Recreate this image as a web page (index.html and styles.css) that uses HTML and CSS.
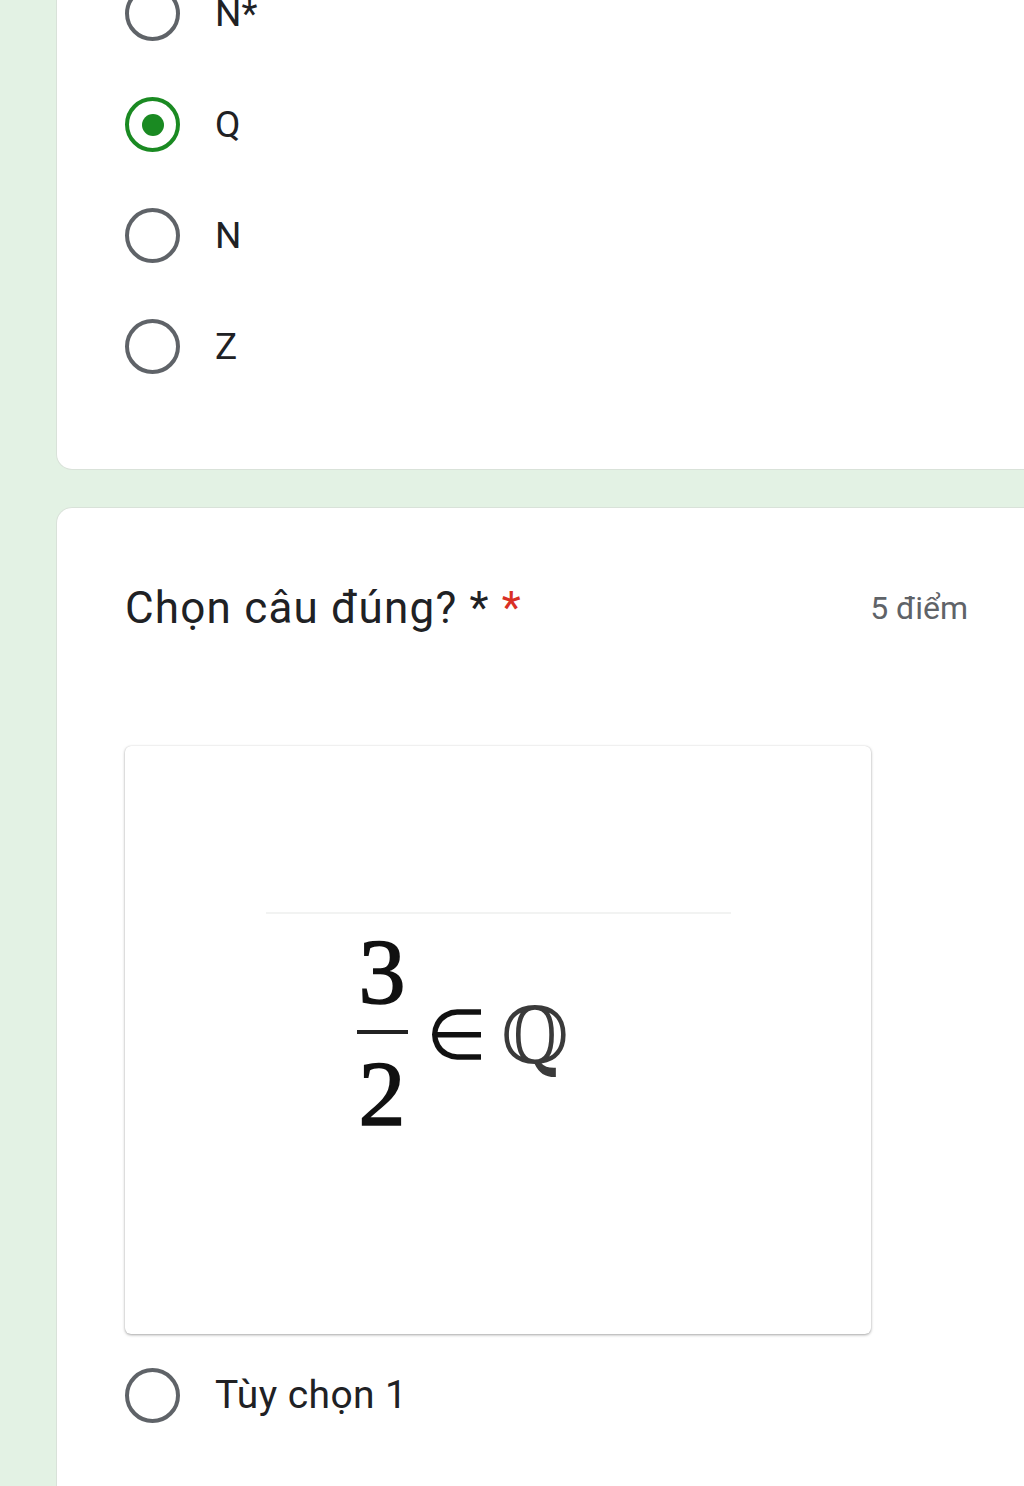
FILE: index.html
```html
<!DOCTYPE html>
<html lang="vi">
<head>
<meta charset="utf-8">
<title>Form</title>
<link rel="stylesheet" href="styles.css">
</head>
<body>
<main class="page">
  <section class="card card-top">
    <div class="option"><span class="radio"></span><span class="label">N*</span></div>
    <div class="option"><span class="radio checked"><span class="dot"></span></span><span class="label">Q</span></div>
    <div class="option"><span class="radio"></span><span class="label">N</span></div>
    <div class="option"><span class="radio"></span><span class="label">Z</span></div>
  </section>
  <section class="card card-q">
    <div class="q-head">
      <div class="q-title">Chọn câu đúng? * <span class="req">*</span></div>
      <div class="q-points">5 điểm</div>
    </div>
    <div class="q-image">
      <div class="img-line"></div>
      <div class="math">
        <span class="frac">
          <span class="num">3</span>
          <span class="bar"></span>
          <span class="den">2</span>
        </span>
        <span class="elem">∈</span>
        <span class="setq">ℚ</span>
      </div>
    </div>
    <div class="option option-last"><span class="radio"></span><span class="label label-lg">Tùy chọn 1</span></div>
  </section>
</main>
</body>
</html>
```

FILE: styles.css
```css
html, body {
  margin: 0;
  padding: 0;
}
body {
  background: #e3f2e4;
  overflow: hidden;
  font-family: Roboto, "Noto Sans", "Liberation Sans", sans-serif;
  color: #202124;
}
.page {
  padding-left: 56px;
  display: flex;
  flex-direction: column;
  gap: 37px;
}
.card {
  background: #ffffff;
  border: 1px solid #d9e2d9;
  margin-right: -40px;
}
.card-top {
  margin-top: -60px;
  padding: 18px 0 67px 68px;
  border-radius: 0 0 0 16px;
  border-top: none;
}
.card-q {
  padding: 76px 0 40px 68px;
  border-radius: 16px 0 0 0;
  border-bottom: none;
  min-height: 1000px;
}
.option {
  height: 111px;
  display: flex;
  align-items: center;
  gap: 35px;
}
.option-last {
  margin-top: 6px;
}
.radio {
  width: 55px;
  height: 55px;
  box-sizing: border-box;
  border: 4px solid #5f6368;
  border-radius: 50%;
  display: flex;
  align-items: center;
  justify-content: center;
  flex: none;
}
.radio.checked {
  border-color: #1a8a22;
}
.dot {
  width: 22px;
  height: 22px;
  border-radius: 50%;
  background: #1a8a22;
}
.label {
  font-size: 37px;
  line-height: 1;
  color: #202124;
}
.label-lg {
  font-size: 39px;
  letter-spacing: 0.4px;
}
.q-head {
  width: 843px;
  display: flex;
  justify-content: space-between;
  align-items: center;
  height: 48px;
}
.q-title {
  font-size: 44px;
  letter-spacing: 1.2px;
  line-height: 48px;
  color: #202124;
}
.req {
  color: #d93025;
}
.q-points {
  font-size: 32px;
  color: #5f6368;
}
.q-image {
  margin-top: 114px;
  width: 746px;
  height: 588px;
  box-sizing: border-box;
  background: #ffffff;
  border-radius: 6px;
  box-shadow: 0 1px 3px rgba(0, 0, 0, 0.35), 0 0 1px rgba(0, 0, 0, 0.15);
  padding-top: 166px;
  padding-left: 141px;
}
.img-line {
  width: 465px;
  height: 2px;
  background: #f2f3f2;
}
.math {
  margin-top: 10px;
  margin-left: 88px;
  display: flex;
  align-items: center;
  font-family: "Liberation Serif", "Times New Roman", serif;
  color: #111;
}
.frac {
  display: flex;
  flex-direction: column;
  align-items: center;
  width: 56px;
}
.num, .den {
  font-size: 94px;
  line-height: 94px;
  font-weight: 400;
  -webkit-text-stroke: 1.6px #111;
}
.bar {
  width: 51px;
  height: 4px;
  background: #222;
  margin: 12px 0;
}
.elem {
  margin-left: 16px;
  font-size: 70px;
  line-height: 1;
  margin-top: 8px;
}
.setq {
  margin-left: 14px;
  margin-top: 8px;
  font-family: "DejaVu Serif", serif;
  font-size: 78px;
  line-height: 1;
  color: #3a3a3a;
}
```
